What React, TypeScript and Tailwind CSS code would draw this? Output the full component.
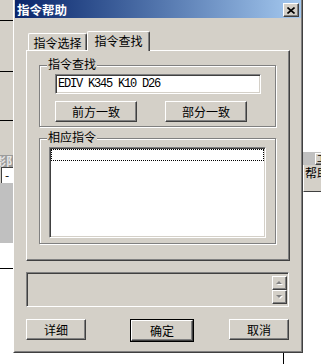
const raised =
  "border border-t-white border-l-white border-r-[#404040] border-b-[#404040] shadow-[inset_-1px_-1px_0_#808080] bg-[#d4d0c8]";
const sunken =
  "border border-t-[#808080] border-l-[#808080] border-r-white border-b-white shadow-[inset_1px_1px_0_#404040,inset_-1px_-1px_0_#d4d0c8]";
const etched = "border border-[#808080] shadow-[inset_1px_1px_0_#fff,1px_1px_0_#fff]";

function Btn({ label, className = "" }: { label: string; className?: string }) {
  return (
    <div className={`${raised} w-[62px] h-[21px] flex items-center justify-center leading-none ${className}`}>
      {label}
    </div>
  );
}

function Arrow({ up }: { up?: boolean }) {
  return (
    <div className={`${raised} w-[15px] h-[14px] flex items-center justify-center`}>
      <svg width="7" height="5" viewBox="0 0 7 5">
        {up ? (
          <>
            <path d="M1 4 L4 1 L7 4 Z" fill="#fff" />
            <path d="M0 3 L3 0 L6 3 Z" fill="#808080" />
          </>
        ) : (
          <>
            <path d="M1 1 L7 1 L4 4 Z" fill="#fff" />
            <path d="M0 0 L6 0 L3 3 Z" fill="#808080" />
          </>
        )}
      </svg>
    </div>
  );
}

export default function App() {
  return (
    <div className="relative w-[321px] h-[364px] overflow-hidden bg-white font-['Noto_Sans_CJK_SC','Liberation_Sans',sans-serif] text-[12px] text-black">
      {/* window behind, left edge */}
      <div className="absolute left-0 top-0 w-[13px] h-[364px] flex flex-col">
        <div className="h-[155px] bg-[#d4d0c8] flex flex-col">
          <div className="h-[20px]" />
          <div className="h-px bg-black" />
          <div className="h-[50px]" />
          <div className="h-px bg-black" />
          <div className="h-[48px]" />
          <div className="h-px bg-black" />
        </div>
        <div className="h-[12px] bg-[#9c9c9c] overflow-hidden whitespace-nowrap font-bold text-[#e8e8e8] text-[11px] leading-[12px]">
          <span className="-ml-[5px]">影阝</span>
        </div>
        <div className="h-[16px] bg-[#d4d0c8] pl-[1px]">
          <div className="h-[16px] bg-white border-l border-t border-[#404040] pl-[3px] leading-[14px]">-</div>
        </div>
        <div className="h-[60px] bg-[#c0c0c0]" />
        <div className="flex-1 bg-white pt-[25px]">
          <div className="h-px bg-black" />
        </div>
      </div>

      {/* window behind, right edge */}
      <div className="absolute left-[303px] top-0 w-[18px] h-[364px] flex flex-col">
        <div className="h-[152px] bg-white" />
        <div className="h-[13px] bg-[#c0c0c0] pl-[12px] pt-px">
          <div className={`${raised} h-[12px] w-[10px] text-[9px] leading-[10px] pl-px`}>工</div>
        </div>
        <div className="h-[27px] bg-[#d4d0c8] border-l border-l-white border-b border-b-[#404040] whitespace-nowrap overflow-hidden pl-px leading-[16px]">
          帮助
        </div>
        <div className="flex-1 bg-white" />
      </div>

      <div className="absolute left-[283px] top-[353px] w-px h-[11px] bg-black" />

      {/* dialog */}
      <div className="absolute left-[13px] top-[-2px] w-[290px] h-[355px] border border-t-white border-l-white border-r-[#404040] border-b-[#404040]">
        <div className="h-full border border-t-[#d4d0c8] border-l-[#d4d0c8] border-r-[#808080] border-b-[#808080] bg-[#d4d0c8] flex flex-col">
          <div className="h-[18px] flex items-start bg-linear-to-r from-[#0a246a] to-[#a6caf0] pl-[2px]">
            <span className="font-bold text-white leading-[19px] text-[12.5px]">指令帮助</span>
            <div className={`${raised} ml-auto mt-[3px] mr-[2px] w-[16px] h-[14px] flex items-center justify-center`}>
              <svg width="8" height="7" viewBox="0 0 8 7">
                <path d="M0.5 0.5 L7.5 6.5 M7.5 0.5 L0.5 6.5" stroke="#000" strokeWidth="1.6" />
              </svg>
            </div>
          </div>

          <div className="px-[11px] pt-[13px]">
            <div className="flex items-end h-[19px]">
              <div className="ml-[2px] w-[59px] h-[17px] border-l border-t border-r border-l-white border-t-white border-r-[#404040] rounded-t-[2px] shadow-[inset_-1px_0_0_#808080] flex items-center justify-center pt-[2px] leading-none">
                指令选择
              </div>
              <div className="relative z-10 -mb-px w-[63px] h-[20px] bg-[#d4d0c8] border-l border-t border-r border-l-white border-t-white border-r-[#404040] rounded-t-[2px] shadow-[inset_-1px_0_0_#808080] flex items-center justify-center pb-[2px] leading-none">
                指令查找
              </div>
            </div>

            <div className="h-[211px] w-[264px] border border-t-white border-l-white border-r-[#404040] border-b-[#404040] shadow-[inset_-1px_-1px_0_#808080] pl-[12px] pt-[14px]">
              <div className={`relative ${etched} w-[237px] h-[62px] pl-[15px] pt-[8px]`}>
                <span className="absolute left-[7px] -top-[9px] bg-[#d4d0c8] px-px leading-[14px]">指令查找</span>
                <div className={`${sunken} bg-white w-[206px] h-[20px] pl-[2px] flex items-center font-['Liberation_Mono',monospace] text-[12px] tracking-[-1.2px]`}>
                  EDIV K345 K10 D26
                </div>
                <div className="flex mt-[7px] gap-[28px]">
                  <Btn label="前方一致" className="w-[82px]" />
                  <Btn label="部分一致" className="w-[82px]" />
                </div>
              </div>

              <div className={`relative ${etched} mt-[11px] w-[237px] h-[106px] pl-[9px] pt-[8px]`}>
                <span className="absolute left-[7px] -top-[9px] bg-[#d4d0c8] px-px leading-[14px]">相应指令</span>
                <div className={`${sunken} bg-white w-[217px] h-[91px] p-px`}>
                  <div className="h-[12px] border border-dotted border-black" />
                </div>
              </div>
            </div>

            <div className={`${sunken} mt-[11px] w-[263px] h-[35px] flex justify-end pt-[3px] pr-px`}>
              <div className="flex flex-col">
                <Arrow up />
                <Arrow />
              </div>
            </div>

            <div className="flex mt-[12px] w-[263px]">
              <Btn label="详细" />
              <div className="ml-[44px] border border-black">
                <Btn label="确定" className="w-[60px] h-[19px]" />
              </div>
              <Btn label="取消" className="ml-[35px]" />
            </div>
          </div>
        </div>
      </div>
    </div>
  );
}
